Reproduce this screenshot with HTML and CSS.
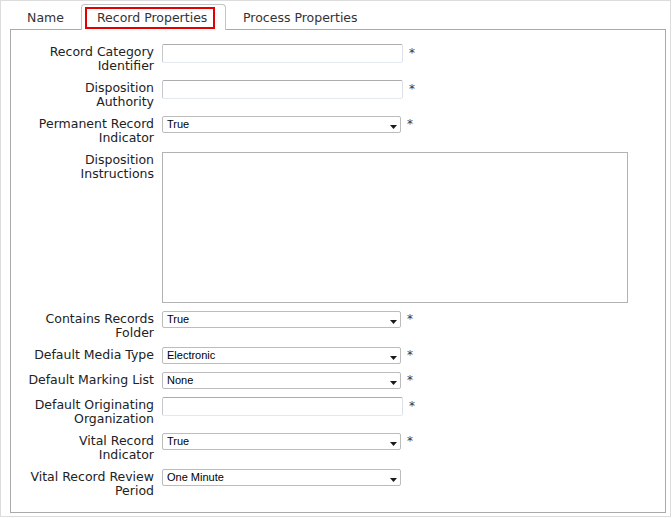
FILE: index.html
```html
<!DOCTYPE html>
<html>
<head>
<meta charset="utf-8">
<link rel="stylesheet" href="styles.css">
</head>
<body>
<div class="frame">
  <div class="tabs">
    <div class="tab tab-name">Name</div>
    <div class="tab tab-active"><span class="hl">Record Properties</span></div>
    <div class="tab tab-process">Process Properties</div>
  </div>
  <div class="panel">
    <div class="row">
      <div class="lbl">Record Category<br>Identifier</div>
      <div class="field"><input class="txt" type="text"><span class="req req-txt">*</span></div>
    </div>
    <div class="row">
      <div class="lbl">Disposition<br>Authority</div>
      <div class="field"><input class="txt" type="text"><span class="req req-txt">*</span></div>
    </div>
    <div class="row">
      <div class="lbl">Permanent Record<br>Indicator</div>
      <div class="field"><span class="selwrap"><select class="sel"><option>True</option></select><svg class="arrow" width="7" height="4" viewBox="0 0 7 4"><path d="M0 0H7L3.5 4Z" fill="#1a1a1a"/></svg></span><span class="req">*</span></div>
    </div>
    <div class="row">
      <div class="lbl">Disposition<br>Instructions</div>
      <div class="field"><textarea class="area"></textarea></div>
    </div>
    <div class="row">
      <div class="lbl">Contains Records<br>Folder</div>
      <div class="field"><span class="selwrap"><select class="sel"><option>True</option></select><svg class="arrow" width="7" height="4" viewBox="0 0 7 4"><path d="M0 0H7L3.5 4Z" fill="#1a1a1a"/></svg></span><span class="req">*</span></div>
    </div>
    <div class="row">
      <div class="lbl">Default Media Type</div>
      <div class="field"><span class="selwrap"><select class="sel"><option>Electronic</option></select><svg class="arrow" width="7" height="4" viewBox="0 0 7 4"><path d="M0 0H7L3.5 4Z" fill="#1a1a1a"/></svg></span><span class="req">*</span></div>
    </div>
    <div class="row">
      <div class="lbl">Default Marking List</div>
      <div class="field"><span class="selwrap"><select class="sel"><option>None</option></select><svg class="arrow" width="7" height="4" viewBox="0 0 7 4"><path d="M0 0H7L3.5 4Z" fill="#1a1a1a"/></svg></span><span class="req">*</span></div>
    </div>
    <div class="row">
      <div class="lbl">Default Originating<br>Organization</div>
      <div class="field"><input class="txt" type="text"><span class="req req-txt">*</span></div>
    </div>
    <div class="row">
      <div class="lbl">Vital Record<br>Indicator</div>
      <div class="field"><span class="selwrap"><select class="sel"><option>True</option></select><svg class="arrow" width="7" height="4" viewBox="0 0 7 4"><path d="M0 0H7L3.5 4Z" fill="#1a1a1a"/></svg></span><span class="req">*</span></div>
    </div>
    <div class="row">
      <div class="lbl">Vital Record Review<br>Period</div>
      <div class="field"><span class="selwrap"><select class="sel"><option>One Minute</option></select><svg class="arrow" width="7" height="4" viewBox="0 0 7 4"><path d="M0 0H7L3.5 4Z" fill="#1a1a1a"/></svg></span></div>
    </div>
  </div>
</div>
</body>
</html>
```
FILE: styles.css
```css
html, body {
  margin: 0;
  padding: 0;
  background: #fff;
}
body {
  font-family: "DejaVu Sans", Verdana, sans-serif;
  font-size: 12.5px;
  color: #222;
}
.frame {
  box-sizing: border-box;
  width: 671px;
  height: 517px;
  border: 1px solid #dcdcdc;
  display: flex;
  flex-direction: column;
}
.tabs {
  display: flex;
  height: 28px;
  padding-left: 9px;
  flex: none;
}
.tab {
  box-sizing: border-box;
  color: #333;
  line-height: 22px;
  padding-top: 6px;
  white-space: nowrap;
}
.tab-name {
  width: 71px;
  text-align: center;
}
.tab-active {
  position: relative;
  z-index: 1;
  width: 145px;
  height: 26px;
  margin-top: 3px;
  padding: 2px 10px 1px 3px;
  border: 1px solid #c4c4c4;
  border-bottom: none;
  border-radius: 4px 4px 0 0;
  background: #fff;
  line-height: normal;
}
.hl {
  display: block;
  box-sizing: border-box;
  height: 22px;
  border: 2px solid #e40000;
  padding: 1px 0 1px 10px;
  line-height: 16px;
}
.tab-process {
  padding-left: 17px;
}
.panel {
  flex: 1;
  margin: 0 4px 3px 9px;
  border: 1px solid #aaa;
  padding-top: 14px;
  display: flex;
  flex-direction: column;
  gap: 8px;
}
.row {
  display: flex;
  align-items: flex-start;
}
.lbl {
  flex: none;
  width: 143px;
  margin-right: 8px;
  padding-top: 1px;
  margin-bottom: -1px;
  text-align: right;
  line-height: 14px;
  white-space: nowrap;
  color: #222;
}
.field {
  display: flex;
  align-items: flex-start;
}
.txt {
  box-sizing: border-box;
  width: 241px;
  height: 19px;
  margin: 0;
  padding: 0 3px;
  border: 1px solid;
  border-color: #acacac #dde1e6 #e3e9ef #c5c9ce;
  border-radius: 2px;
  background: #fff;
  font-family: "Liberation Sans", Arial, sans-serif;
  font-size: 11px;
}
.selwrap {
  position: relative;
  display: block;
  width: 239px;
  height: 17px;
}
.sel {
  -webkit-appearance: none;
  appearance: none;
  box-sizing: border-box;
  display: block;
  width: 239px;
  height: 17px;
  margin: 0;
  padding: 0 16px 0 4px;
  border: 1px solid #bcbcbc;
  border-radius: 2px;
  background: #fff;
  color: #000;
  font-family: "Liberation Sans", Arial, sans-serif;
  font-size: 11px;
  line-height: 15px;
}
.arrow {
  position: absolute;
  right: 4px;
  top: 9px;
  display: block;
}
.req {
  margin-left: 6px;
  font-size: 12px;
  line-height: 14px;
  padding-top: 1px;
  color: #4a3424;
}
.req-txt {
  margin-left: 6px;
  padding-top: 2px;
}
.area {
  display: block;
  box-sizing: border-box;
  width: 466px;
  height: 151px;
  margin: 0;
  border: 1px solid #b2b2b2;
  resize: none;
  background: #fff;
}
```
